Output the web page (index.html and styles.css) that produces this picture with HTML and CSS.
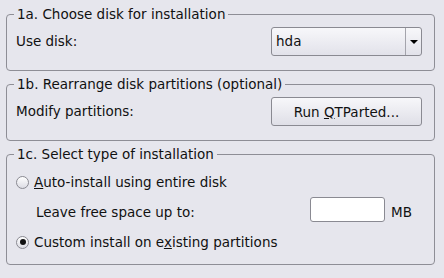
FILE: index.html
```html
<!DOCTYPE html>
<html lang="en">
<head>
    <meta charset="UTF-8">
    <title>Install options</title>
    <link rel="stylesheet" href="styles.css">
</head>
<body>
    <div class="panel">
        <fieldset class="group">
            <legend>1a. Choose disk for installation</legend>
            <div class="row">
                <span class="label">Use disk:</span>
                <div class="combo">
                    <span class="combo-value">hda</span>
                    <span class="combo-button"><span class="arrow"></span></span>
                </div>
            </div>
        </fieldset>

        <fieldset class="group">
            <legend>1b. Rearrange disk partitions (optional)</legend>
            <div class="row">
                <span class="label">Modify partitions:</span>
                <button class="push">Run <u>Q</u>TParted...</button>
            </div>
        </fieldset>

        <fieldset class="group group-type">
            <legend>1c. Select type of installation</legend>
            <div class="row">
                <span class="radio"></span>
                <span class="label"><u>A</u>uto-install using entire disk</span>
            </div>
            <div class="row">
                <span class="label indent">Leave free space up to:</span>
                <input class="size-input" type="text" value="">
                <span class="unit">MB</span>
            </div>
            <div class="row">
                <span class="radio checked"></span>
                <span class="label">Custom install on e<u>x</u>isting partitions</span>
            </div>
        </fieldset>
    </div>
</body>
</html>
```

FILE: styles.css
```css
* {
    margin: 0;
    padding: 0;
    box-sizing: border-box;
}

body {
    font-family: "DejaVu Sans", sans-serif;
    font-size: 13.5px;
    line-height: 15px;
    background: #e6e6ed;
    color: #111111;
    width: 444px;
    height: 278px;
    overflow: hidden;
}

.panel {
    padding: 7px 9px 0 6px;
}

.group {
    border: 1px solid #8e8e96;
    border-radius: 4px;
    padding: 5px 12px 14px 9px;
    min-width: 0;
}

.group + .group {
    margin-top: 6px;
}

.group legend {
    padding: 0 3px;
    margin-left: -2px;
    line-height: 15px;
}

.group-type {
    padding-bottom: 7px;
}

.row {
    display: flex;
    align-items: center;
    height: 29px;
}

.group-type .row {
    height: 30px;
}

.label {
    flex: 1;
    white-space: nowrap;
}

.indent {
    padding-left: 20px;
}

.combo {
    width: 151px;
    height: 29px;
    display: flex;
    border: 1px solid #8a8a92;
    border-radius: 3px;
    background: linear-gradient(#f7f7fa, #e2e2ea);
}

.combo-value {
    flex: 1;
    padding-left: 4px;
    display: flex;
    align-items: center;
}

.combo-button {
    width: 16px;
    border-left: 1px solid #a4a4ac;
    display: flex;
    align-items: center;
    justify-content: center;
}

.arrow {
    width: 0;
    height: 0;
    border-left: 4px solid transparent;
    border-right: 4px solid transparent;
    border-top: 4px solid #000000;
}

.push {
    width: 151px;
    height: 29px;
    font-family: inherit;
    font-size: 13.5px;
    color: #111111;
    border: 1px solid #8a8a92;
    border-radius: 3px;
    background: linear-gradient(#f7f7fa, #dfdfe7);
}

.radio {
    width: 13px;
    height: 13px;
    border: 1px solid #8a8a92;
    border-radius: 50%;
    background: linear-gradient(#ffffff, #dcdce4);
    margin-right: 5px;
    display: flex;
    align-items: center;
    justify-content: center;
}

.radio.checked::after {
    content: "";
    width: 6px;
    height: 6px;
    border-radius: 50%;
    background: #111111;
}

.size-input {
    width: 75px;
    height: 25px;
    margin-bottom: 5px;
    border: 1px solid #8a8a92;
    border-radius: 3px;
    background: #ffffff;
    font-family: inherit;
    font-size: 13.5px;
}

.unit {
    width: 37px;
    padding-left: 6px;
}
```
